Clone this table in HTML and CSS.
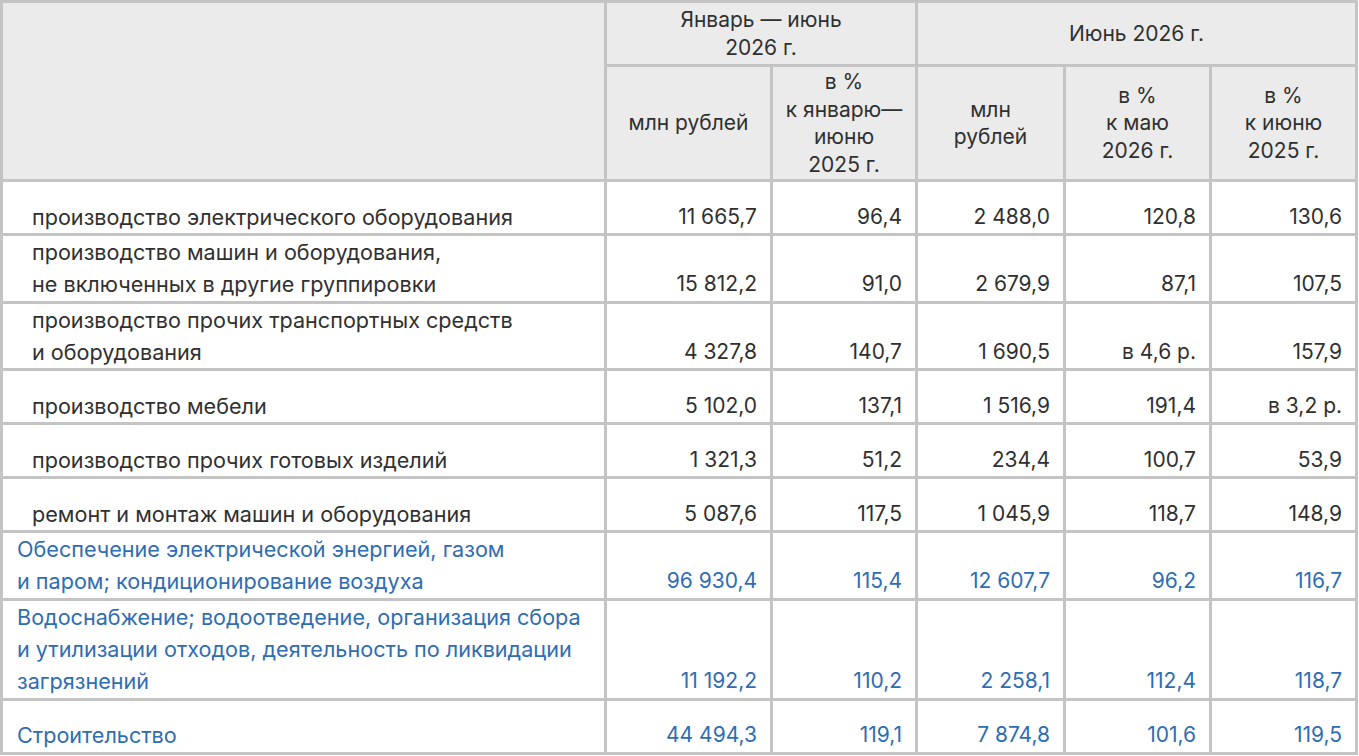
FILE: index.html
```html
<!DOCTYPE html>
<html lang="ru">
<head>
<meta charset="utf-8">
<title>Таблица</title>
<link rel="stylesheet" href="styles.css">
</head>
<body>
<table class="stat">
  <colgroup>
    <col class="c-name">
    <col class="c-a">
    <col class="c-b">
    <col class="c-c">
    <col class="c-d">
    <col class="c-e">
  </colgroup>
  <thead>
    <tr class="h1">
      <th rowspan="2"></th>
      <th colspan="2">Январь — июнь<br>2026 г.</th>
      <th colspan="3">Июнь 2026 г.</th>
    </tr>
    <tr class="h2">
      <th>млн рублей</th>
      <th>в %<br>к январю—<br>июню<br>2025 г.</th>
      <th>млн<br>рублей</th>
      <th>в %<br>к маю<br>2026 г.</th>
      <th>в %<br>к июню<br>2025 г.</th>
    </tr>
  </thead>
  <tbody>
    <tr>
      <td class="name sub">производство электрического оборудования</td>
      <td>11 665,7</td><td>96,4</td><td>2 488,0</td><td>120,8</td><td>130,6</td>
    </tr>
    <tr>
      <td class="name sub">производство машин и оборудования,<br>не включенных в другие группировки</td>
      <td>15 812,2</td><td>91,0</td><td>2 679,9</td><td>87,1</td><td>107,5</td>
    </tr>
    <tr>
      <td class="name sub">производство прочих транспортных средств<br>и оборудования</td>
      <td>4 327,8</td><td>140,7</td><td>1 690,5</td><td>в 4,6 р.</td><td>157,9</td>
    </tr>
    <tr>
      <td class="name sub">производство мебели</td>
      <td>5 102,0</td><td>137,1</td><td>1 516,9</td><td>191,4</td><td>в 3,2 р.</td>
    </tr>
    <tr>
      <td class="name sub">производство прочих готовых изделий</td>
      <td>1 321,3</td><td>51,2</td><td>234,4</td><td>100,7</td><td>53,9</td>
    </tr>
    <tr>
      <td class="name sub">ремонт и монтаж машин и оборудования</td>
      <td>5 087,6</td><td>117,5</td><td>1 045,9</td><td>118,7</td><td>148,9</td>
    </tr>
    <tr class="main">
      <td class="name">Обеспечение электрической энергией, газом<br>и паром; кондиционирование воздуха</td>
      <td>96 930,4</td><td>115,4</td><td>12 607,7</td><td>96,2</td><td>116,7</td>
    </tr>
    <tr class="main">
      <td class="name">Водоснабжение; водоотведение, организация сбора<br>и утилизации отходов, деятельность по ликвидации<br>загрязнений</td>
      <td>11 192,2</td><td>110,2</td><td>2 258,1</td><td>112,4</td><td>118,7</td>
    </tr>
    <tr class="main">
      <td class="name">Строительство</td>
      <td>44 494,3</td><td>119,1</td><td>7 874,8</td><td>101,6</td><td>119,5</td>
    </tr>
  </tbody>
</table>
</body>
</html>
```

FILE: styles.css
```css
html, body {
  margin: 0;
  padding: 0;
  background: #ffffff;
}

body {
  font-family: Inter, Roboto, "Liberation Sans", sans-serif;
  font-size: 21px;
  color: #303030;
}

.stat {
  border-collapse: collapse;
  table-layout: fixed;
  width: 1358px;
  border: 3px solid #c4c4c4;
}

.c-name { width: 604px; }
.c-a { width: 166px; }
.c-b { width: 145px; }
.c-c { width: 148px; }
.c-d { width: 146px; }
.c-e { width: 146px; }

.stat th,
.stat td {
  border: 3px solid #c4c4c4;
}

.stat th {
  background: #ebebeb;
  font-weight: 400;
  line-height: 27.5px;
  text-align: center;
  vertical-align: middle;
  padding: 0 6px;
}

.h1 th {
  height: 61px;
}

.h2 th {
  height: 112px;
}

.stat td {
  height: 51px;
  padding: 0 13px 0 14px;
  line-height: 32.3px;
  vertical-align: bottom;
  text-align: right;
  white-space: nowrap;
}

.stat td.name {
  text-align: left;
  font-size: 21.6px;
}

.stat td.sub {
  padding-left: 29px;
}

.main td {
  color: #2e6db3;
}
```
